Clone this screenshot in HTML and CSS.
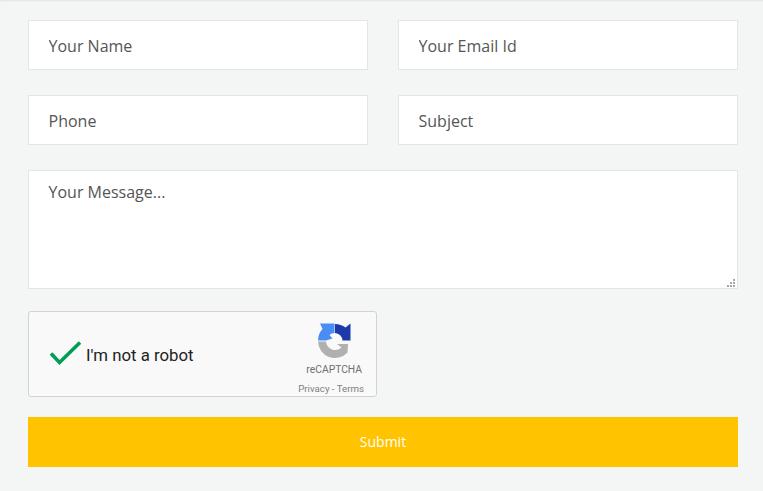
FILE: index.html
```html
<!DOCTYPE html>
<html lang="en">
<head>
    <meta charset="UTF-8">
    <meta name="viewport" content="width=device-width, initial-scale=1.0">
    <title>Contact</title>
    <link rel="stylesheet" href="styles.css">
</head>
<body>
    <form class="contact-form">
        <div class="field-grid">
            <input class="field" type="text" placeholder="Your Name">
            <input class="field" type="text" placeholder="Your Email Id">
            <input class="field" type="text" placeholder="Phone">
            <input class="field" type="text" placeholder="Subject">
        </div>

        <div class="message-wrap">
            <textarea class="field field-message" placeholder="Your Message..."></textarea>
            <svg class="resize-grip" width="9" height="9" viewBox="0 0 9 9" fill="#a8a8a8">
                <rect x="6" y="0" width="2" height="2"></rect>
                <rect x="3" y="3" width="2" height="2"></rect>
                <rect x="6" y="3" width="2" height="2"></rect>
                <rect x="0" y="6" width="2" height="2"></rect>
                <rect x="3" y="6" width="2" height="2"></rect>
                <rect x="6" y="6" width="2" height="2"></rect>
            </svg>
        </div>

        <div class="captcha">
            <svg class="captcha-check" width="34" height="26" viewBox="0 0 34 26" fill="none">
                <path d="M2 12.5 L10.5 21.5 L31 1.5" stroke="#009e55" stroke-width="3.6"></path>
            </svg>
            <span class="captcha-label">I'm not a robot</span>
            <div class="captcha-brand">
                <svg class="captcha-logo" width="36" height="36" viewBox="0 0 36 36">
                    <path d="M1 17.5 A17 17 0 0 1 5.5 6 L3 0.5 H17.5 V10 A8 8 0 0 0 12.5 12 L15.5 15.5 L9 17.5 Z" fill="#4a8ef5"></path>
                    <path d="M18 1 A17 17 0 0 1 28.5 4.5 L33.5 0.5 V17.5 H25.5 A8 8 0 0 0 18 10 Z" fill="#1c3aa9"></path>
                    <path d="M1 18.5 H9 A9.2 9.2 0 0 0 24.5 24.5 L20 21 H31 L30.5 29.5 A17 17 0 0 1 1 18.5 Z" fill="#b0b0b0"></path>
                </svg>
                <span class="captcha-name">reCAPTCHA</span>
                <span class="captcha-links">Privacy - Terms</span>
            </div>
        </div>

        <button class="btn-submit" type="button">Submit</button>
    </form>
</body>
</html>
```

FILE: styles.css
```css
* {
    box-sizing: border-box;
    margin: 0;
    padding: 0;
}

body {
    font-family: 'Open Sans', sans-serif;
    background: #f4f6f6;
    min-height: 100vh;
    box-shadow: inset 0 2px 2px -1px rgba(0, 0, 0, 0.08);
}

.contact-form {
    padding: 20px 25px 24px 28px;
}

.field-grid {
    display: grid;
    grid-template-columns: 340px 340px;
    column-gap: 30px;
    row-gap: 25px;
    margin-bottom: 25px;
}

.field {
    display: block;
    width: 100%;
    height: 50px;
    padding: 2px 19.5px 0;
    background: #fff;
    border: 1px solid #e1e6ea;
    font-family: inherit;
    font-size: 16px;
    color: #555;
    outline: none;
}

.field::placeholder {
    color: #555;
    opacity: 1;
}

.message-wrap {
    position: relative;
    margin-bottom: 22px;
}

.field-message {
    height: 119px;
    padding-top: 10px;
    resize: none;
}

.resize-grip {
    position: absolute;
    right: 2px;
    bottom: 1px;
}

.captcha {
    display: flex;
    align-items: center;
    width: 349px;
    height: 86px;
    padding: 0 12px 0 20px;
    margin-bottom: 20px;
    background: #f9f9f9;
    border: 1px solid #d3d3d3;
    border-radius: 3px;
    font-family: Roboto, sans-serif;
}

.captcha-check {
    flex: none;
    margin: 0 3px 0 0;
}

.captcha-label {
    flex: 1;
    font-size: 16.8px;
    color: #222;
    margin-top: 1px;
}

.captcha-brand {
    display: flex;
    flex-direction: column;
    align-items: flex-end;
    width: 68px;
    padding-top: 10px;
}

.captcha-logo {
    flex: none;
    margin-right: 11px;
}

.captcha-name {
    font-size: 10.3px;
    line-height: 14px;
    margin: 4px 2px 0 0;
    color: #707070;
}

.captcha-links {
    font-size: 9.7px;
    line-height: 12px;
    margin-top: 6px;
    white-space: nowrap;
    color: #808080;
}

.btn-submit {
    display: block;
    width: 710px;
    height: 50px;
    padding-bottom: 2px;
    background: #ffc300;
    border: none;
    color: #fff;
    font-family: inherit;
    font-size: 14px;
    cursor: pointer;
}
```
